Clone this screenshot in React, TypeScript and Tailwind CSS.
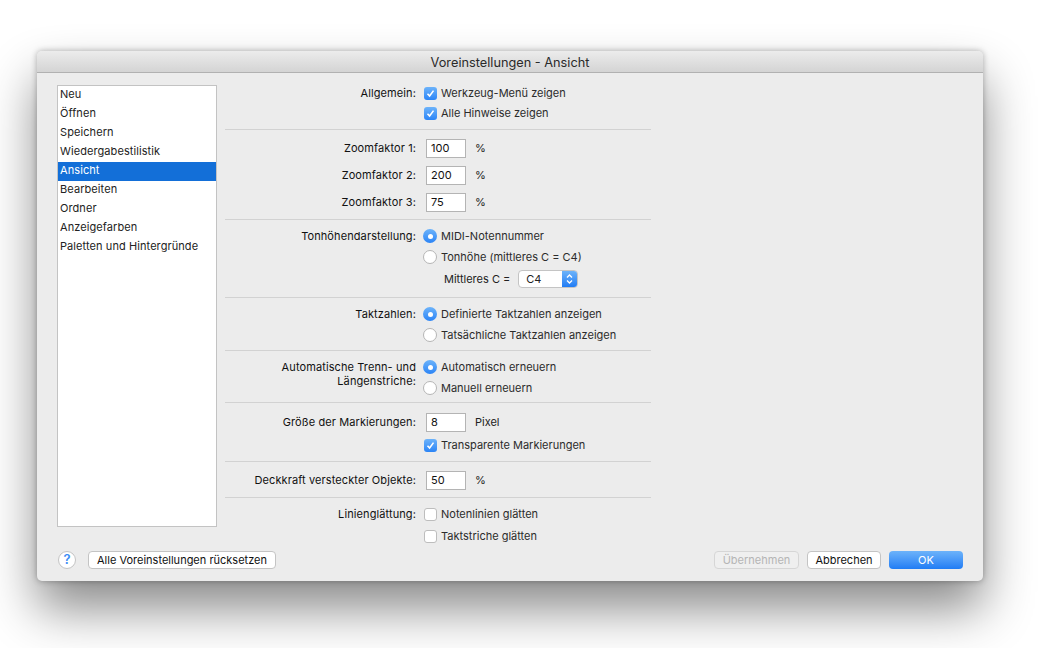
import React from "react";

const sidebarItems = ["Neu", "Öffnen", "Speichern", "Wiedergabestilistik", "Ansicht", "Bearbeiten", "Ordner", "Anzeigefarben", "Paletten und Hintergründe"];

function Check({ on, children }: { on?: boolean; children: React.ReactNode }) {
  return (
    <div className="flex items-center h-5">
      {on ? (
        <span className="w-[13px] h-[13px] rounded-[3px] bg-gradient-to-b from-[#6cb3fa] to-[#2a84f6] flex items-center justify-center">
          <svg width="9" height="9" viewBox="0 0 9 9"><path d="M1.5 4.8 L3.6 7 L7.5 1.6" fill="none" stroke="#fff" strokeWidth="1.6" /></svg>
        </span>
      ) : (
        <span className="w-[13px] h-[13px] rounded-[3px] bg-white border border-[#bdbdbd]" />
      )}
      <span className="ml-1 pt-px text-[#2b2b2b]">{children}</span>
    </div>
  );
}

function Radio({ on, children }: { on?: boolean; children: React.ReactNode }) {
  return (
    <div className="flex items-center h-5 -ml-px">
      {on ? (
        <span className="w-[14px] h-[14px] rounded-full bg-gradient-to-b from-[#6cb3fa] to-[#2a84f6] flex items-center justify-center">
          <span className="w-[5px] h-[5px] rounded-full bg-white" />
        </span>
      ) : (
        <span className="w-[14px] h-[14px] rounded-full bg-white border border-[#b5b5b5]" />
      )}
      <span className="ml-1 pt-px text-[#2b2b2b]">{children}</span>
    </div>
  );
}

function Field({ value, unit }: { value: string; unit: string }) {
  return (
    <div className="flex items-center h-5 ml-[2px]">
      <span className="w-10 h-[19px] bg-white border border-[#b4b4b4] pl-1 leading-[17px] text-[#111]">{value}</span>
      <span className="ml-[9px] pt-px text-[#222]">{unit}</span>
    </div>
  );
}

function Row({ label, children, className = "" }: { label?: React.ReactNode; children: React.ReactNode; className?: string }) {
  return (
    <div className={`flex gap-2 ${className}`}>
      <div className="w-[191px] text-right leading-5 text-[#111] tracking-[0.1px]">{label}</div>
      <div className="flex-1">{children}</div>
    </div>
  );
}

const Sep = () => <div className="h-px w-[426px] bg-[#d2d2d2]" />;

export default function App() {
  return (
    <div className="w-[1054px] h-[648px] bg-white overflow-hidden pt-[51px] pl-[37px] text-[11px]" style={{ fontFamily: '"Inter", "Liberation Sans", sans-serif' }}>
      <div className="w-[946px] h-[530px] rounded-[5px] bg-[#ececec] shadow-[0_28px_50px_rgba(0,0,0,0.46),0_0_6px_rgba(0,0,0,0.3)] overflow-hidden">
        <div className="h-[22px] bg-gradient-to-b from-[#ececec] to-[#d4d4d4] border-b border-[#b1b1b1] text-center text-[12.75px] leading-[23px] text-[#2a2a2a]">
          Voreinstellungen - Ansicht
        </div>
        <div className="pl-5 pr-5 pt-[10px]">
          <div className="flex">
            <div className="w-[160px] h-[442px] mt-[2px] bg-white border border-[#c3c3c3] tracking-[0.08px]">
              {sidebarItems.map((s) => (
                <div key={s} className={`h-[19px] leading-[17px] pl-[2px] ${s === "Ansicht" ? "bg-[#136fd8] text-white" : "text-[#222]"}`}>{s}</div>
              ))}
            </div>
            <div className="ml-2 flex-1">
              <div className="pb-[6px]">
                <Row label="Allgemein:">
                  <Check on>Werkzeug-Menü zeigen</Check>
                  <Check on>Alle Hinweise zeigen</Check>
                </Row>
              </div>
              <Sep />
              <div className="pt-2 pb-[7px] flex flex-col gap-[7px]">
                <Row label="Zoomfaktor 1:"><Field value="100" unit="%" /></Row>
                <Row label="Zoomfaktor 2:"><Field value="200" unit="%" /></Row>
                <Row label="Zoomfaktor 3:"><Field value="75" unit="%" /></Row>
              </div>
              <Sep />
              <div className="pt-[6px] pb-2">
                <Row label="Tonhöhendarstellung:">
                  <Radio on>MIDI-Notennummer</Radio>
                  <div className="mt-px"><Radio>Tonhöhe (mittleres C = C4)</Radio></div>
                  <div className="mt-[2px] h-5 flex items-center ml-5 text-[#222]">
                    <span>Mittleres C =</span>
                    <div className="ml-2 w-[60px] h-[18px] rounded-[4px] bg-white border border-[#c4c4c4] flex overflow-hidden">
                      <span className="flex-1 pl-[7px] leading-[16px] text-[#222]">C4</span>
                      <span className="w-[15px] bg-gradient-to-b from-[#6cb3fa] to-[#1f7cf4] flex items-center justify-center">
                        <svg width="9" height="12" viewBox="0 0 9 12"><path d="M2 4.5 L4.5 2 L7 4.5 M2 7.5 L4.5 10 L7 7.5" fill="none" stroke="#fff" strokeWidth="1.3" /></svg>
                      </span>
                    </div>
                  </div>
                </Row>
              </div>
              <Sep />
              <div className="pt-[6px] pb-[5px]">
                <Row label="Taktzahlen:">
                  <Radio on>Definierte Taktzahlen anzeigen</Radio>
                  <div className="mt-px"><Radio>Tatsächliche Taktzahlen anzeigen</Radio></div>
                </Row>
              </div>
              <Sep />
              <div className="pt-[6px] pb-1">
                <Row label={<div className="leading-[14px] pt-[3px]">Automatische Trenn- und<br />Längenstriche:</div>}>
                  <Radio on>Automatisch erneuern</Radio>
                  <div className="mt-px"><Radio>Manuell erneuern</Radio></div>
                </Row>
              </div>
              <Sep />
              <div className="pt-[9px] pb-[6px]">
                <Row label="Größe der Markierungen:">
                  <Field value="8" unit="Pixel" />
                  <div className="mt-[3px]"><Check on>Transparente Markierungen</Check></div>
                </Row>
              </div>
              <Sep />
              <div className="pt-2 pb-[7px]">
                <Row label="Deckkraft versteckter Objekte:"><Field value="50" unit="%" /></Row>
              </div>
              <Sep />
              <div className="pt-[6px]">
                <Row label="Linienglättung:">
                  <Check>Notenlinien glätten</Check>
                  <div className="mt-[2px]"><Check>Taktstriche glätten</Check></div>
                </Row>
              </div>
            </div>
          </div>
          <div className="mt-[5px] flex items-center h-[18px]">
            <span className="ml-px w-[18px] h-[18px] rounded-full bg-white border border-[#c4c4c4] flex items-center justify-center text-[13px] font-semibold text-[#3b8cf5]">?</span>
            <span className="ml-3 w-[188px] h-[18px] rounded-[4px] bg-white border border-[#c4c4c4] text-center leading-[17px] text-[#111]">Alle Voreinstellungen rücksetzen</span>
            <span className="ml-auto w-[85px] h-[18px] rounded-[4px] bg-[#efefef] border border-[#d6d6d6] text-center leading-[17px] text-[#b5b5b5]">Übernehmen</span>
            <span className="ml-2 w-[74px] h-[18px] rounded-[4px] bg-white border border-[#c4c4c4] text-center leading-[17px] text-[#111]">Abbrechen</span>
            <span className="ml-2 w-[74px] h-[18px] rounded-[4px] bg-gradient-to-b from-[#6cb3fa] to-[#1f7cf4] text-center leading-[18px] text-white">OK</span>
          </div>
        </div>
      </div>
    </div>
  );
}
